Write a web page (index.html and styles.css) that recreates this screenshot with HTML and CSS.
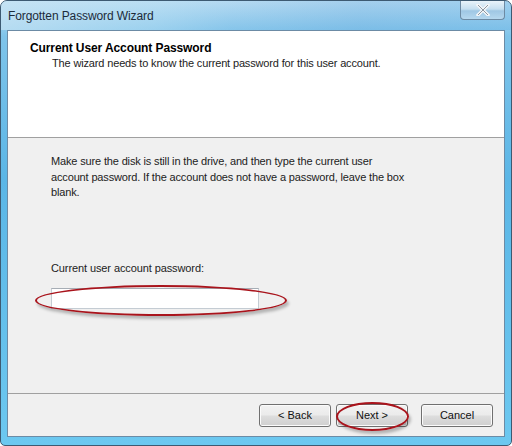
FILE: index.html
```html
<!DOCTYPE html>
<html lang="en">
<head>
    <meta charset="UTF-8">
    <title>Forgotten Password Wizard</title>
    <link rel="stylesheet" href="styles.css">
</head>
<body>
    <div class="window">
        <div class="titlebar">
            <span class="title">Forgotten Password Wizard</span>
            <div class="close">
                <svg width="14" height="12" viewBox="0 0 14 12">
                    <path d="M2 1 L12 11 M12 1 L2 11" stroke="#f4f6f8" stroke-width="3.2" stroke-linecap="square"/>
                    <path d="M2 1 L12 11 M12 1 L2 11" stroke="#8c96a0" stroke-width="1" fill="none"/>
                </svg>
            </div>
        </div>
        <div class="client">
            <div class="header">
                <div class="header-title">Current User Account Password</div>
                <div class="header-sub">The wizard needs to know the current password for this user account.</div>
            </div>
            <div class="content">
                <p class="intro">Make sure the disk is still in the drive, and then type the current user account password. If the account does not have a password, leave the box blank.</p>
                <label class="field-label" for="pwd">Current user account password:</label>
                <div class="field">
                    <input type="password" id="pwd" class="textbox">
                    <div class="ring ring-box"></div>
                </div>
            </div>
            <div class="footer">
                <button class="btn">&lt; Back</button>
                <div class="next-wrap">
                    <button class="btn">Next &gt;</button>
                    <div class="ring ring-next"></div>
                </div>
                <button class="btn btn-cancel">Cancel</button>
            </div>
        </div>
    </div>
</body>
</html>
```
FILE: styles.css
```css
body {
    margin: 0;
    font-family: "Liberation Sans", Arial, sans-serif;
    font-size: 11px;
    background: #fff;
}

.window {
    width: 510px;
    height: 444px;
    border: 1px solid #3d5a72;
    border-radius: 7px 7px 5px 5px;
    background: linear-gradient(180deg, #bfe0f4 0%, #7fc4ea 8%, #5bb6e6 40%, #6cc8f0 100%);
    display: flex;
    flex-direction: column;
    overflow: hidden;
}

.titlebar {
    height: 29px;
    display: flex;
    align-items: flex-start;
    justify-content: space-between;
    background: linear-gradient(90deg, rgba(200,228,244,0.7) 0%, rgba(180,220,242,0.4) 30%, rgba(90,160,220,0.1) 45%, rgba(60,140,210,0.2) 70%, rgba(90,170,225,0.3) 100%);
}

.title {
    padding: 8px 0 0 7px;
    font-size: 12px;
    color: #1c2b3a;
    letter-spacing: -0.1px;
}

.close {
    width: 43px;
    height: 18px;
    margin-right: 6px;
    border: 1px solid #6d8aa3;
    border-top: none;
    border-radius: 0 0 4px 4px;
    background: linear-gradient(180deg, #e9f3fa 0%, #c6dff0 45%, #9fc7e4 55%, #b6d8ef 100%);
    display: flex;
    align-items: center;
    justify-content: center;
}

.client {
    flex: 1;
    margin: 0 6px 8px 6px;
    border: 1px solid #6c8ba5;
    background: #f0f0f0;
    display: flex;
    flex-direction: column;
}

.header {
    height: 107px;
    background: #fff;
    border-bottom: 1px solid #a0a0a0;
    padding: 10px 0 0 22px;
    box-sizing: border-box;
}

.header-title {
    font-weight: bold;
    font-size: 12px;
    color: #000;
    letter-spacing: -0.1px;
}

.header-sub {
    padding-left: 22px;
    margin-top: 2px;
    color: #222;
    letter-spacing: -0.15px;
}

.content {
    flex: 1;
    padding: 16px 40px 0 43px;
}

.intro {
    margin: 0;
    width: 358px;
    line-height: 15.5px;
    color: #222;
    letter-spacing: -0.15px;
}

.field-label {
    display: block;
    margin-top: 61px;
    color: #222;
    letter-spacing: -0.1px;
}

.field {
    position: relative;
    margin-top: 14px;
}

.textbox {
    width: 208px;
    height: 21px;
    box-sizing: border-box;
    border: 1px solid #c4ccd3;
    border-top-color: #a6adb5;
    background: #fff;
    margin: 0;
    display: block;
}

.ring {
    position: absolute;
    border: 2px solid #a9141c;
    border-radius: 50%;
    box-shadow: 2px 3px 3px rgba(0,0,0,0.25);
}

.ring-box {
    left: -16px;
    top: -3px;
    width: 248px;
    height: 27px;
}

.footer {
    height: 42px;
    border-top: 1px solid #a0a0a0;
    display: flex;
    justify-content: flex-end;
    align-items: center;
    padding-right: 11px;
    gap: 5px;
}

.btn {
    width: 72px;
    height: 23px;
    font-family: inherit;
    font-size: 11px;
    color: #111;
    border: 1px solid #707070;
    border-radius: 3px;
    background: linear-gradient(180deg, #f2f2f2 0%, #ebebeb 48%, #dddddd 52%, #cfcfcf 100%);
    box-shadow: inset 0 0 0 1px #fbfbfb;
    padding: 0;
}

.btn-cancel {
    margin-left: 8px;
}

.next-wrap {
    position: relative;
}

.next-wrap .btn {
    display: block;
}

.ring-next {
    left: 0;
    top: -2px;
    width: 69px;
    height: 25px;
}
```
